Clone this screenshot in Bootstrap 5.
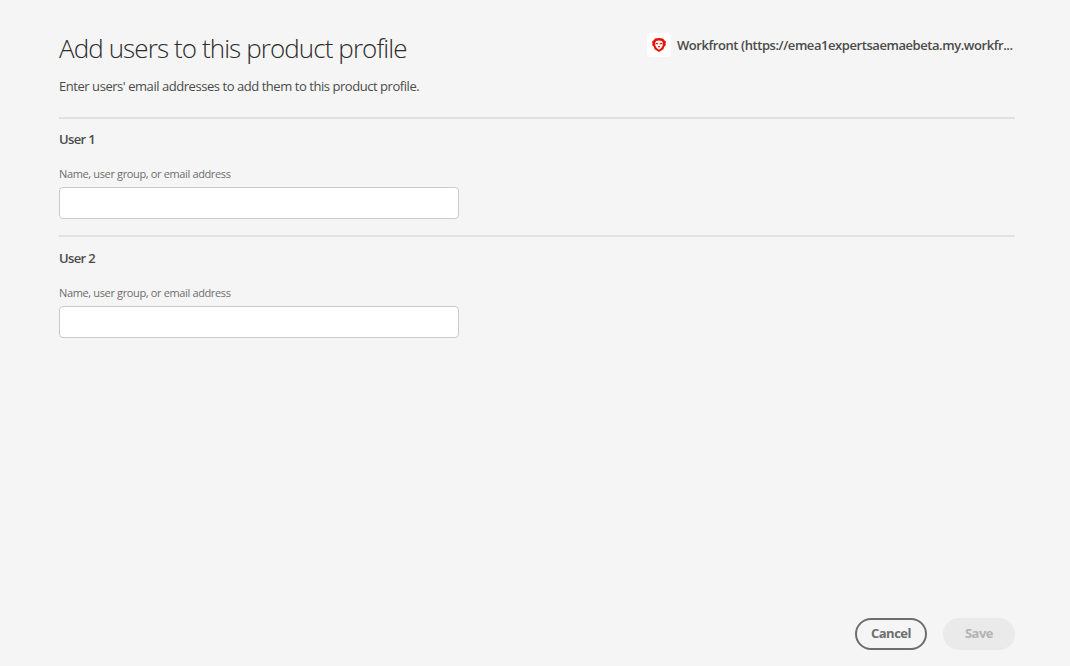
<!DOCTYPE html>
<html lang="en">
<head>
<meta charset="utf-8">
<meta name="viewport" content="width=device-width, initial-scale=1">
<title>Add users to this product profile</title>
<link href="https://cdn.jsdelivr.net/npm/bootstrap@5.3.0/dist/css/bootstrap.min.css" rel="stylesheet">
<style>
body{background:#f5f5f5;color:#4b4b4b;font-family:"Open Sans","Noto Sans",sans-serif;font-size:13px;line-height:20px}
.dialog-page{padding:31px 55px 16px 59px}
.page-title{font-size:26px;line-height:34px;font-weight:300;color:#2c2c2c;letter-spacing:-.91px}
.intro{margin-top:11px;margin-bottom:21px;letter-spacing:-.45px}
.product{width:368px;height:24px;margin-top:2px;gap:6px;font-weight:600}
.product-name{letter-spacing:-.435px}
.product-icon{width:24px;height:24px;flex:none}
.user-block{border-top:2px solid #e1e1e1;height:118px;padding-top:10px}
.user-block + .user-block{padding-top:11px}
.user-name{font-size:13px;line-height:20px;font-weight:600;letter-spacing:-.65px}
.field-label{font-size:11px;line-height:16px;color:#6e6e6e;margin:17px 0 5px;letter-spacing:-.36px}
.field-box{width:400px;height:32px;border:1px solid #cacaca;border-radius:4px;background:#fff}
.pill{height:32px;width:72px;padding:0 0 2px;border:2px solid #6e6e6e;font-size:13px;line-height:18px;font-weight:700;color:#6e6e6e;letter-spacing:-.5px}
.pill:disabled{background:#eaeaea;border-color:#eaeaea;color:#b3b3b3;opacity:1}
</style>
</head>
<body>
<main class="dialog-page vh-100 d-flex flex-column">
  <header class="d-flex justify-content-between align-items-start">
    <div>
      <h1 class="page-title mb-0 text-nowrap">Add users to this product profile</h1>
      <p class="intro text-nowrap">Enter users' email addresses to add them to this product profile.</p>
    </div>
    <div class="product d-flex align-items-center">
      <svg class="product-icon" viewBox="0 0 24 24" aria-hidden="true">
        <rect width="24" height="24" rx="4" fill="#fff"/>
        <path fill="#eb1000" d="M8 5.500l4-.5 4 .5 1.500 2 1.500 1-.5 2 .3 1.700-1.500 1.300-.9 2.700L12 19l-4.400-2.800-.9-2.700-1.500-1.300.3-1.700-.5-2 1.500-1z"/>
        <path fill="#fff" d="M9.200 8l2.800-.6 2.800.6 1 1.500-.2 3.300-1.300 2.200L12 16.700 9.700 15l-1.300-2.200-.2-3.300z"/>
        <path fill="#eb1000" d="M8.800 9.700l2.400.5v1.300l-2.400-.6zM15.200 9.700l-2.400.5v1.300l2.400-.6zM10.900 13h2.200l-.3 1-.8.600-.8-.6z"/>
      </svg>
      <span class="product-name text-nowrap">Workfront (https://emea1expertsaemaebeta.my.workfr...</span>
    </div>
  </header>
  <section class="user-block">
    <h2 class="user-name mb-0">User 1</h2>
    <label class="field-label d-block" for="user1">Name, user group, or email address</label>
    <input class="field-box d-block" id="user1" type="text">
  </section>
  <section class="user-block">
    <h2 class="user-name mb-0">User 2</h2>
    <label class="field-label d-block" for="user2">Name, user group, or email address</label>
    <input class="field-box d-block" id="user2" type="text">
  </section>
  <footer class="mt-auto d-flex justify-content-end gap-3">
    <button class="btn rounded-pill pill" type="button">Cancel</button>
    <button class="btn rounded-pill pill" type="button" disabled>Save</button>
  </footer>
</main>
<script src="https://cdn.jsdelivr.net/npm/bootstrap@5.3.0/dist/js/bootstrap.bundle.min.js"></script>
</body>
</html>
